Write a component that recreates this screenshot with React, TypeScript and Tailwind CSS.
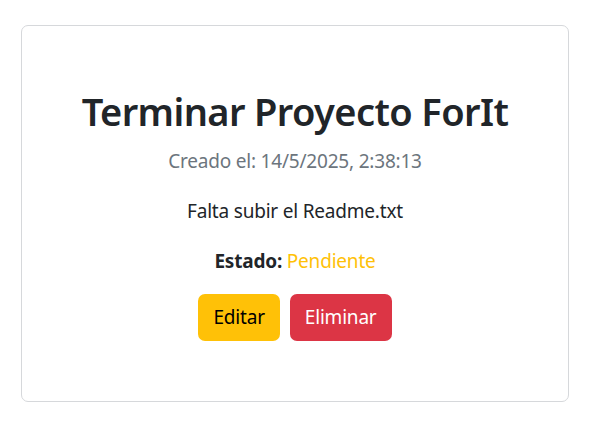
export default function App() {
  return (
    <main className="min-h-screen bg-white pt-[25px] font-['Noto_Sans',sans-serif]">
      <div className="ml-[21px] w-[548px] h-[377px] border border-[#d6d8db] rounded-[7px] bg-white px-[40px] pt-[60px] text-center text-[#212529]">
        <h1 className="whitespace-nowrap text-[38px] leading-[50px] font-semibold tracking-[-0.6px]">Terminar Proyecto ForIt</h1>
        <p className="mt-[10px] text-[19px] leading-[30px] tracking-[-0.2px] text-[#6c757d]">Creado el: 14/5/2025, 2:38:13</p>
        <p className="mt-[20px] text-[19px] leading-[30px] tracking-[-0.2px]">Falta subir el Readme.txt</p>
        <p className="mt-[20px] text-[19px] leading-[30px] tracking-[-0.2px]">
          <strong className="font-bold">Estado:</strong>{" "}
          <span className="text-[#ffc107]">Pendiente</span>
        </p>
        <div className="mt-[18px] flex justify-center gap-[10px]">
          <button className="h-[47px] px-[15px] rounded-[7px] bg-[#ffc107] text-black text-[19px] tracking-[-0.2px]">Editar</button>
          <button className="h-[47px] px-[15px] rounded-[7px] bg-[#dc3545] text-white text-[19px] tracking-[-0.2px]">Eliminar</button>
        </div>
      </div>
    </main>
  );
}
